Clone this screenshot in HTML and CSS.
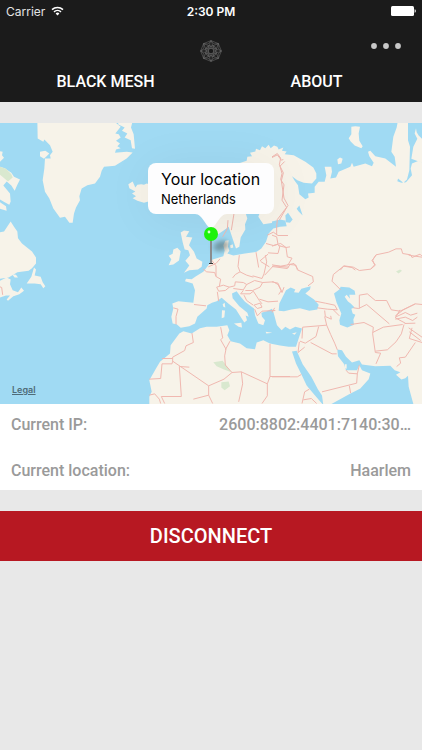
FILE: index.html
```html
<!DOCTYPE html>
<html lang="en">
<head>
    <meta charset="UTF-8">
    <meta name="viewport" content="width=device-width, initial-scale=1.0">
    <title>Black Mesh</title>
    <link rel="stylesheet" href="styles.css">
</head>
<body>
    <header class="header">
        <!-- Status bar -->
        <div class="status">
            <div class="carrier">
                <span>Carrier</span>
                <svg class="wifi" viewBox="0 0 13 10" aria-hidden="true">
                    <path d="M1 3.6a8 8 0 0 1 11 0M3 5.9a5.1 5.1 0 0 1 7 0" fill="none" stroke="#fff" stroke-width="1.5"/>
                    <path d="M4.6 7.4a2.8 2.8 0 0 1 3.8 0L6.5 9.4z" fill="#fff"/>
                </svg>
            </div>
            <span class="time">2:30 PM</span>
            <svg class="battery" viewBox="0 0 25 10" aria-hidden="true">
                <rect width="23" height="10" rx="1.5" fill="#fff"/>
                <path d="M23.6 3.2q1.2.2 1.2 1.8t-1.2 1.8z" fill="#fff"/>
            </svg>
        </div>

        <div class="toolbar">
            <svg class="logo" viewBox="-11 -11 22 22" aria-hidden="true">
                <g fill="none" stroke="#777" stroke-width=".5">
                    <path d="M0-10.4 7.4-7.4 10.4 0 7.4 7.4 0 10.4-7.4 7.4-10.4 0-7.4-7.4z"/>
                    <path d="M0-10.4 7.4 7.4-10.4 0 7.4-7.4 0 10.4-7.4-7.4 10.4 0-7.4 7.4z"/>
                    <path d="M0-10.4 3-7 7.4-7.4 7-3 10.4 0 7 3 7.4 7.4 3 7 0 10.4-3 7-7.4 7.4-7 3-10.4 0-7-3-7.4-7.4-3-7z"/>
                    <path d="M0-6 4.2-4.2 6 0 4.2 4.2 0 6-4.2 4.2-6 0-4.2-4.2z"/>
                    <path d="M-2.5-2.5h5v5h-5zM0-3.5 3.5 0 0 3.5-3.5 0z"/>
                </g>
            </svg>
            <button class="more" type="button" aria-label="More">
                <svg viewBox="0 0 30 6" aria-hidden="true">
                    <circle cx="3" cy="3" r="2.9"/>
                    <circle cx="15" cy="3" r="2.9"/>
                    <circle cx="27" cy="3" r="2.9"/>
                </svg>
            </button>
        </div>

        <nav class="tabs">
            <a href="#mesh">BLACK MESH</a>
            <a href="#about">ABOUT</a>
        </nav>
    </header>

    <main>
        <section class="map">
            <svg class="world" viewBox="0 368 1266 844" preserveAspectRatio="xMidYMid slice" aria-hidden="true">
                <!-- Land -->
                <g class="land">
                    <path d="M635 685L624 672 628 655 622 645 640 620 664 590 690 520 715 490 740 482 742 470 756 468 750 458 766 454 768 446 780 450 786 438 796 444 806 434 812 444 822 436 832 440 836 448 850 442 846 452 860 454 854 462 881 465 916 485 940 502 949 520 949 535 936 550 911 548 892 540 876 528 884 542 894 555 898 582 916 597 926 592 924 580 944 578 944 560 956 545 974 545 979 525 974 500 994 500 996 515 991 535 1008 532 1016 515 1051 500 1056 488 1061 500 1096 490 1116 498 1121 488 1108 468 1104 455 1111 452 1126 468 1156 475 1188 500 1184 470 1174 455 1180 410 1190 382 1194 360H1224V420L1230 440 1228 510 1221 538 1210 548 1194 535 1192 543 1204 548 1218 546 1236 525 1232 505 1236 490 1256 482 1270 488V1215H448L448 1190 455 1175 448 1140 468 1105 480 1085 510 1060 512 1035 538 1000 550 993 575 1000 600 984 620 980 650 980 682 975 688 990 682 1005 692 1023 720 1030 740 1044 765 1047 770 1027 790 1020 810 1030 840 1036 866 1040 888 1040 896 1015 906 985 886 980 870 988 856 980 845 990 831 975 820 935 816 926 800 933 784 938 786 950 795 960 790 975 775 970 765 945 762 925 735 905 722 890 710 873 696 880 698 894 718 918 742 938 746 950 737 946 741 960 733 967 725 955 708 928 685 910 665 893 650 903 636 908 622 915 620 925 592 950 585 970 568 978 542 983 530 972 518 970 514 950 520 925 517 910 535 903 580 908 585 870 578 850 555 843 558 836 575 837 588 828 610 815 625 795 638 778 670 768 674 752 670 735 676 722 686 720 684 740 688 752 682 760 700 766 735 760 770 755 784 745 798 725 806 700 820 685 840 680 860 678 856 662 830 666 790 672 775 650 784 625 800 608 815 585 800 590 780 600 755 622 738 642 742 655 735 672 736 688 722 712 718 740 708 745 700 722 692 698 686 680 672 690 652 704z"/>
                    <!-- Greenland -->
                    <path d="M338 360H112L113 415 130 425 133 418 150 435 158 455 150 465 152 475 135 475 133 505 128 540 135 575 148 595 160 625 180 653 195 650 208 668 218 668 222 640 228 622 240 600 238 588 245 565 262 555 285 550 300 530 305 512 312 500 345 497 380 475 398 457 380 455 345 458 348 448 362 444 352 438 360 430 348 422 362 412 356 402 346 400 362 380z"/>
                    <path d="M120 455L136 452 148 460 132 476 120 468z"/>
                    <path d="M358 360L354 372 374 382 366 392 382 400 374 412 392 420 396 444 405 446 401 402 393 382 398 362z"/>
                    <!-- Iceland -->
                    <path d="M385 552L398 544 406 562 412 554 424 552 432 554 440 550 452 554 470 560 476 582 458 600 432 608 412 602 398 594 408 588 396 580 406 574 388 564z"/>
                    <!-- Britain and Ireland -->
                    <path d="M542 697L552 691 568 693 558 710 577 712 567 735 582 755 590 775 607 785 605 800 594 808 568 810 552 818 568 796 556 782 570 765 565 750 554 748 548 726z"/>
                    <path d="M520 748L532 743 542 753 537 781 520 793 506 795 514 777 506 767 518 761z"/>
                    <!-- Mediterranean and Baltic islands -->
                    <path d="M702 970L724 968 726 982 716 980zM666 930L675 931 673 951 665 954zM668 912L674 908 676 922 670 920zM797 995L817 998 799 1000zM690 736L698 732 700 742 692 744z"/>
                    <!-- Arctic islands -->
                    <path d="M1066 378L1080 380 1076 400 1078 422 1088 438 1084 444 1064 436 1052 424 1046 414 1054 402 1054 380zM1012 478L1020 472 1028 476 1024 490 1014 492zM1200 368L1212 372 1218 368z"/>
                    <path d="M1248 384L1244 400 1252 416 1240 440 1234 476 1250 482 1270 488V420L1256 406 1250 396z"/>
                    <!-- Canada -->
                    <path d="M0 453L8 455 6 465 12 473 0 485zM0 500L14 504 34 518 42 530 60 538 52 554 44 572 34 556 20 544 10 556 30 580 32 604 28 614 14 606 0 598zM0 606L18 618 20 632 0 626z"/>
                    <path d="M0 696L12 694 24 676 32 664 42 680 52 694 54 714 66 730 96 754 108 772 108 790 96 804 86 812 52 816 26 832 0 836V842L20 832 32 838 30 852 38 870 54 876 64 862 72 872 58 882 40 888 24 902 20 898 30 886 18 886 0 892z"/>
                    <path d="M80 850L94 830 102 802 108 808 104 826 122 830 128 846 136 858 130 864 122 852 104 850zM36 822L48 824 54 832 44 832z"/>
                </g>

                <!-- Parks -->
                <g class="park">
                    <path d="M0 500L18 506 34 522 38 532 24 544 10 532 0 524z"/>
                    <path d="M640 1086L668 1082 682 1100 694 1116 672 1108 650 1098zM664 1146L686 1144 690 1158 674 1170 664 1162zM1188 814L1200 808 1206 812 1196 820z"/>
                </g>

                <!-- Inland seas -->
                <g class="water">
                    <path d="M836 932L838 910 850 886 858 870 872 862 886 868 882 876 896 878 904 866 932 858 930 868 916 880 942 898 956 914 952 928 928 932 900 924 874 928 852 933z"/>
                    <path d="M1002 880L1018 868 1022 860 1048 862 1064 872 1066 884 1048 884 1050 896 1040 884 1034 890 1044 904 1052 910 1064 922 1054 926 1058 940 1066 944 1060 958 1062 974 1042 982 1020 974 1018 960 1024 940 1010 908z"/>
                    <path d="M876 1054L890 1052 908 1092 934 1130 954 1168 966 1186 970 1215 940 1180 920 1156 904 1122 888 1090z"/>
                    <path d="M816 664L840 658 858 662 846 672 816 676zM856 646L864 638 878 658 870 668 858 666zM890 626L898 616 908 646 896 634z"/>
                    <path d="M1241 1215H988L1046 1183 1081 1165 1106 1137 1111 1120 1086 1110 1078 1095 1071 1110 1038 1110 1031 1090 1014 1068 1012 1048 1026 1050 1038 1070 1056 1087 1078 1080 1086 1093 1126 1098 1171 1097 1184 1110 1201 1116 1188 1124 1204 1138 1216 1134 1224 1127 1226 1160z"/>
                </g>
                <path class="land" d="M876 1000L890 996 884 1004zM1034 1092L1040 1092 1040 1106 1034 1104z"/>

                <!-- Borders -->
                <g class="border">
                    <g transform="translate(420 360)">
                        <path d="M248 350L262 326 264 300M282 280L274 330M396 112L412 104 424 120 430 118M434 124L420 138 426 160 422 178 432 194 426 240 440 262 418 300M382 345L400 336 414 346 444 346M378 370L400 376 422 370 438 382 450 380M384 398L414 400 420 376M360 422L384 402M362 424L388 440M348 396L356 442M205 440L228 430 240 416"/>
                    </g>
                    <g transform="translate(816 360)">
                        <path d="M0 110L16 100 26 114 22 134 34 158 28 182 36 234 48 256 16 298 14 320 14 345M0 345L14 350 18 372 0 378M18 376L42 382 46 410 60 414 48 434 26 438 0 434M46 434L66 430 78 448M205 450L215 438 240 442 250 450M296 447L308 434 302 420 312 404 350 396 372 386 388 386 392 400 416 404 420 412 444 402 450 408"/>
                    </g>
                    <g transform="translate(420 765)">
                        <path d="M215 15L228 32 228 64M190 42L200 50 224 52 228 64 242 72 238 94M230 96L250 90 268 96 256 106 236 108zM232 110L236 138M162 148L198 152M100 158L114 162 108 184 108 208M298 0L294 34 300 50 286 58 278 68M300 50L320 60 340 66M268 96L284 92 286 80 310 82 320 88 310 104 280 100M320 88L344 76 368 82 360 96 338 106 316 106M338 62L366 70 372 56 380 20 376 0M374 60L400 32 446 36M368 82L400 80 414 88 426 112 432 96M310 106L302 116 330 116 340 108 358 136 366 146M312 120L320 136 340 150M342 150L360 144 366 156 352 160zM344 162L352 182 366 168 406 166M358 132L384 140 414 138M404 158L396 172"/>
                        <path d="M156 234L160 262 138 272 134 286 98 306 98 318M98 310H66M98 318L96 326 66 326 62 370 28 372M98 318L206 392 252 372 276 352M242 216L248 248 242 254 258 282 254 302 256 330 276 352M270 258L256 284M276 352L304 350 382 386M390 266V364L382 386V422L366 445M390 364H450M148 336L118 334 124 424H64L74 445M206 392V420L160 432M206 420L218 445M304 350L308 386 296 440M28 420L44 416 58 432 62 445"/>
                    </g>
                    <g transform="translate(816 765)">
                        <path d="M0 34L46 40 54 28 72 30 76 44 122 64 124 80 108 92M0 80L18 84 28 106 20 118M130 138L160 144 188 150 196 164 166 162 136 158M184 164L202 182M158 166L160 184 178 192 176 182M158 184L164 210 92 216 90 250M140 214L132 244 100 264 84 258M116 262L180 296 194 296M164 210L176 238 188 264 196 284M82 260L78 292 98 276M236 208L276 202 304 216 302 236 310 292 326 294 312 326M310 288L346 284 372 260 388 236 396 208M302 232L334 216 392 208M244 158L260 160 284 148 352 206M262 160V120L286 116 310 136 344 136 358 164 384 168 430 146 450 148M430 146L394 164 370 182M370 186L400 172 416 180 436 174M370 192L400 186 422 196 436 186M384 164L370 188 400 204M410 218L450 246M412 230L446 256M398 205L430 204M420 218L412 250 450 262M430 262L400 306 382 308 386 324 374 334M206 104L180 78 184 58 216 32 244 36 262 46 296 42 310 30 300 16 312 0M222 345L230 354 256 356 262 330M256 356L254 384 150 410M232 392L236 414M0 365H76L88 358M90 445L98 410 112 402M94 434L118 430 134 445M410 0L450 6"/>
                    </g>
                    <path d="M0 860L5 862 8 884"/>
                </g>
            </svg>

            <a class="legal" href="#legal">Legal</a>

            <div class="marker">
                <div class="callout">
                    <div class="callout-title">Your location</div>
                    <div class="callout-text">Netherlands</div>
                </div>
                <svg class="pin" viewBox="0 0 52 54" aria-hidden="true">
                    <defs>
                        <filter id="soft" x="-50%" y="-50%" width="200%" height="200%">
                            <feGaussianBlur stdDeviation="2.4"/>
                        </filter>
                    </defs>
                    <path d="M10 0c8 0 11 14 16 14S34 0 42 0z" fill="#fdfdfe"/>
                    <ellipse cx="36" cy="32" rx="8" ry="5" fill="#455" opacity=".5" filter="url(#soft)" transform="rotate(-18 36 32)"/>
                    <path d="M25 26h2v23h-2z" fill="#8a8c8e"/>
                    <path d="M24 49h4v1h-4z" fill="#333"/>
                    <circle cx="26" cy="20" r="7" fill="#1cf20a"/>
                    <circle cx="24" cy="18" r="1.4" fill="#d8ffd0"/>
                </svg>
            </div>
        </section>

        <dl class="details">
            <div class="row">
                <dt>Current IP:</dt>
                <dd>2600:8802:4401:7140:30…</dd>
            </div>
            <div class="row">
                <dt>Current location:</dt>
                <dd>Haarlem</dd>
            </div>
        </dl>

        <button class="disconnect" type="button">DISCONNECT</button>
    </main>
</body>
</html>
```

FILE: styles.css
```css
* {
    box-sizing: border-box;
}
body {
    margin: 0;
    min-height: 100vh;
    background: #e8e8e8;
    font-family: Roboto, "Liberation Sans", sans-serif;
    font-weight: 500;
}
.header {
    background: #1b1b1b;
    color: #fff;
}
.status {
    display: grid;
    grid-template-columns: 1fr auto 1fr;
    align-items: center;
    height: 22px;
    padding: 0 6px;
    font-family: Inter, sans-serif;
    font-size: 12px;
}
.carrier {
    display: flex;
    align-items: center;
    gap: 6px;
    font-weight: 400;
    color: #e4e4e4;
}
.wifi {
    width: 13px;
    height: 10px;
}
.time {
    font-weight: 600;
}
.battery {
    width: 25px;
    height: 10px;
    justify-self: end;
}
.toolbar {
    display: grid;
    grid-template-columns: 1fr auto 1fr;
    align-items: center;
    height: 48px;
    padding: 0 21px;
}
.logo {
    grid-column: 2;
    width: 22px;
    height: 32px;
    padding-top: 10px;
}
.more {
    justify-self: end;
    display: flex;
    padding: 0;
    border: none;
    background: none;
    cursor: pointer;
}
.more svg {
    width: 30px;
    height: 6px;
    fill: #c8c8c8;
}
.tabs {
    display: grid;
    grid-template-columns: 1fr 1fr;
    padding-bottom: 8px;
    text-align: center;
    font-size: 16px;
    line-height: 24px;
}
.tabs a {
    color: #fff;
    text-decoration: none;
}
.map {
    position: relative;
    height: 281px;
    margin-top: 21px;
    overflow: hidden;
    background: #a0daf3;
}
.world {
    display: block;
    width: 100%;
    height: 100%;
}
.land {
    fill: #f7f3e9;
}
.water {
    fill: #a0daf3;
}
.park {
    fill: #d9e8cf;
}
.border {
    fill: none;
    stroke: #f0b8b0;
    stroke-width: 3;
    stroke-linejoin: round;
}
.legal {
    position: absolute;
    left: 12px;
    bottom: 8px;
    color: #4f6b78;
    font-family: Inter, sans-serif;
    font-size: 9px;
    font-weight: 600;
    line-height: 12px;
}
.marker {
    position: absolute;
    top: 40px;
    left: 50%;
    transform: translateX(-50%);
    display: flex;
    flex-direction: column;
    align-items: center;
}
.callout {
    width: 126px;
    padding: 6px 13px;
    border-radius: 8px;
    background: #fdfdfe;
    box-shadow: 0 4px 50px rgba(0, 0, 0, 0.06);
    color: #000;
    font-family: Inter, sans-serif;
    font-weight: 400;
    white-space: nowrap;
}
.callout-title {
    font-size: 16px;
    line-height: 21px;
}
.callout-text {
    font-size: 13px;
    line-height: 18px;
}
.pin {
    width: 52px;
    height: 54px;
}
.details {
    display: grid;
    gap: 6px;
    margin: 0;
    background: #fff;
    color: #9a9a9a;
    font-size: 16px;
}
.row {
    display: flex;
    justify-content: space-between;
    align-items: center;
    height: 40px;
    padding: 0 11px;
}
.row dd {
    margin: 0;
}
.disconnect {
    display: block;
    width: 100%;
    height: 50px;
    margin-top: 21px;
    border: none;
    background: #b71822;
    color: #fff;
    font-family: inherit;
    font-size: 20px;
    font-weight: 500;
    cursor: pointer;
}
```
